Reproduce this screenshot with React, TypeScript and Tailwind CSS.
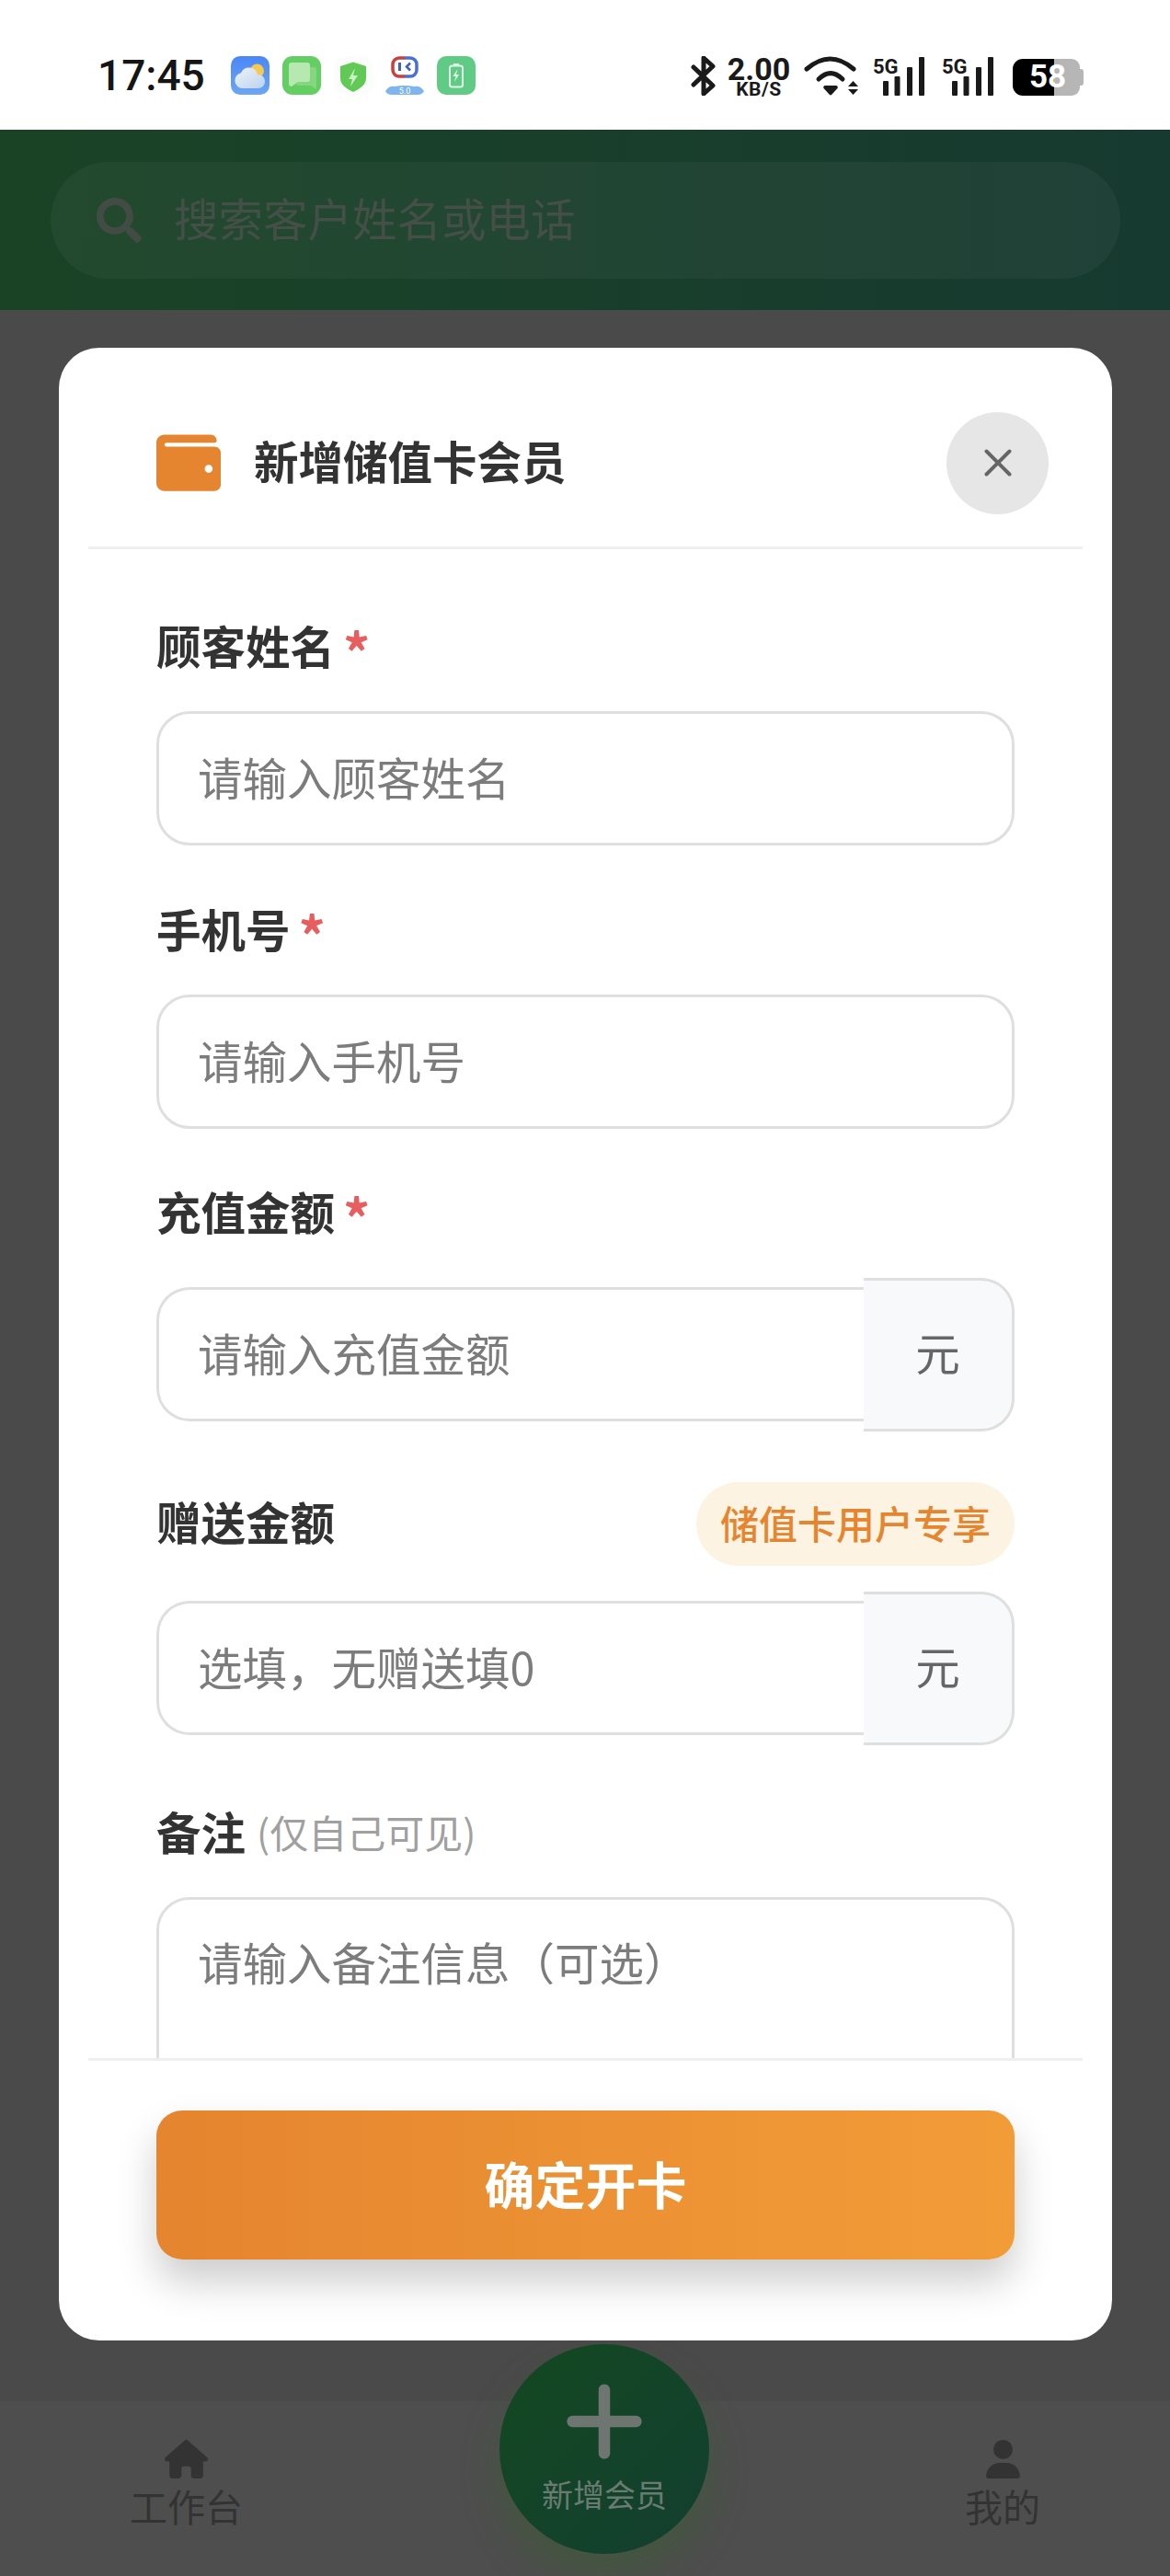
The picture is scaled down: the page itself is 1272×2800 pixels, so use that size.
import React from "react";
import { FaSearch, FaWallet } from "react-icons/fa";
import { FaPlus, FaHouse, FaUser } from "react-icons/fa6";
import { X } from "lucide-react";

function Signal() {
  return (
    <svg width="56" height="43" viewBox="0 0 56 43" fill="#1a1a1a">
      <text x="0" y="19" fontFamily="Roboto" fontWeight="700" fontSize="22">5G</text>
      <rect x="11" y="27" width="6" height="16" rx="1" />
      <rect x="23.5" y="22" width="6" height="21" rx="1" />
      <rect x="37" y="12" width="6" height="31" rx="1" />
      <rect x="50" y="1" width="6" height="42" rx="1" />
    </svg>
  );
}

function StatusLeft() {
  return (
    <div className="flex items-center">
      <span className="w-[114px] text-[46px] leading-[42px] font-medium text-[#151515] font-['Roboto',sans-serif]">17:45</span>
      <div className="ml-[31px] flex gap-[14px]">
        <svg width="42" height="42" viewBox="0 0 42 42">
          <defs>
            <linearGradient id="wx" x1="0" y1="0" x2="0" y2="1">
              <stop offset="0" stopColor="#4a87f5" />
              <stop offset="1" stopColor="#6ea6f2" />
            </linearGradient>
            <linearGradient id="cl" x1="0" y1="0" x2="1" y2="1">
              <stop offset="0" stopColor="#eef3f9" />
              <stop offset="1" stopColor="#bcd2ee" />
            </linearGradient>
          </defs>
          <rect width="42" height="42" rx="10" fill="url(#wx)" />
          <circle cx="28.5" cy="16" r="7.500" fill="#f8c94f" />
          <path d="M13 35a8.500 8.500 0 0 1-2-16.800 9.500 9.500 0 0 1 18 1.800 7.500 7.500 0 0 1 1 15z" fill="url(#cl)" />
        </svg>
        <svg width="42" height="42" viewBox="0 0 42 42">
          <rect width="42" height="42" rx="11" fill="#63cf63" />
          <path d="M15 12h20a2 2 0 0 1 2 2v22l-6-4H17a2 2 0 0 1-2-2z" fill="#85d77f" />
          <path d="M10 7h17a3 3 0 0 1 3 3v15a3 3 0 0 1-3 3H17l-7 5a3 3 0 0 1-3-3V10a3 3 0 0 1 3-3z" fill="#b7e8b2" />
        </svg>
        <svg width="42" height="42" viewBox="0 0 42 42">
          <rect width="42" height="42" rx="10" fill="#fafdfa" />
          <path d="M21 6.500l14 4.500v13c0 7-6 11-14 15-8-4-14-8-14-15V11z" fill="#62c957" />
          <path d="M23 13l-7 12h4l-2 8 8-12h-5z" fill="#c9f1c4" />
        </svg>
        <svg width="42" height="42" viewBox="0 0 42 42">
          <path d="M21 9H15a7 7 0 0 0-7 7v6a7 7 0 0 0 7 7h6" fill="none" stroke="#c9403f" strokeWidth="3.500" transform="translate(0 -7)" />
          <path d="M21 9h6a7 7 0 0 1 7 7v6a7 7 0 0 1-7 7h-6" fill="none" stroke="#4a6fd8" strokeWidth="3.500" transform="translate(0 -7)" />
          <rect x="14" y="7" width="3" height="9" fill="#3e5ec9" />
          <path d="M27 7.500l-4 4 4 4" fill="none" stroke="#3e5ec9" strokeWidth="2.500" />
          <path d="M0 38q4-6 10-5 10-2 22 0 6-1 10 5-2 4-7 4H7q-5 0-7-4z" fill="#7db6ef" />
          <text x="21" y="41" textAnchor="middle" fontSize="9" fill="#fff" fontFamily="Roboto">5.0</text>
        </svg>
        <svg width="42" height="42" viewBox="0 0 42 42">
          <rect width="42" height="42" rx="10" fill="#5fcb85" />
          <rect x="18" y="8" width="6" height="3" fill="#e4f8ea" />
          <rect x="14" y="10.500" width="14" height="23" rx="2.500" fill="none" stroke="#e4f8ea" strokeWidth="2" />
          <path d="M22.500 14l-5 8h3l-1.500 6 5-8h-3z" fill="#e4f8ea" />
        </svg>
      </div>
    </div>
  );
}

function StatusRight() {
  return (
    <div className="flex items-start">
      <svg width="27" height="43" viewBox="0 0 27 43" fill="none" stroke="#1a1a1a" strokeWidth="5" strokeLinejoin="round" strokeLinecap="round">
        <path d="M3 12l21 20-10 9V2l10 9L3 31" />
      </svg>
      <div className="ml-[13px] flex w-[68px] flex-col items-center font-['Roboto',sans-serif] font-bold text-[#1a1a1a]">
        <span className="text-[34px] leading-[28px]">2.00</span>
        <span className="text-[21px] leading-[17px] tracking-[0.5px]">KB/S</span>
      </div>
      <svg className="ml-[15px]" width="59" height="43" viewBox="0 0 59 43" fill="#1a1a1a">
        <path d="M3 14Q28.500-8 54 14" fill="none" stroke="#1a1a1a" strokeWidth="5" strokeLinecap="round" />
        <path d="M16 25Q29 12 42 25" fill="none" stroke="#1a1a1a" strokeWidth="5" strokeLinecap="round" />
        <path d="M23 32h12a2 2 0 0 1 1.500 3L30 42a1.500 1.500 0 0 1-2 0l-6.500-7a2 2 0 0 1 1.500-3z" />
        <path d="M48 33l5.500-6 5.500 6zM48 36h11l-5.500 6z" />
      </svg>
      <div className="ml-[16px]"><Signal /></div>
      <div className="ml-[19px]"><Signal /></div>
      <div className="relative ml-[21px] mt-[3px] flex h-[40px] w-[77px]">
        <div className="h-full w-[45px] rounded-l-[11px] bg-black" />
        <div className="h-full w-[28px] rounded-r-[9px] bg-[#b6b6b6]" />
        <div className="mt-[11px] h-[18px] w-[4px] rounded-r-[3px] bg-[#b6b6b6]" />
        <span className="absolute left-[18px] top-0 text-[35px] leading-[40px] font-bold text-white font-['Roboto',sans-serif]">58</span>
      </div>
    </div>
  );
}

function Label({ text, required }: { text: string; required?: boolean }) {
  return (
    <label className="flex h-[68px] items-center pb-[7px] text-[48.5px] font-bold text-[#333]">
      {text}
      {required && <span className="relative top-[5px] ml-[9px] text-[58px] leading-none text-[#e85d5d]">*</span>}
    </label>
  );
}

function Field({ placeholder }: { placeholder: string }) {
  return (
    <input
      readOnly
      placeholder={placeholder}
      className="mt-[34px] block h-[146px] w-full rounded-[36px] border-[3px] border-[#dfdfdf] bg-white pb-[5px] pl-[42px] pr-[40px] text-[48.5px] outline-none placeholder:text-[#7c7c7c]"
    />
  );
}

function Money({ placeholder, className }: { placeholder: string; className: string }) {
  return (
    <div className={`flex h-[166px] items-center ${className}`}>
      <input
        readOnly
        placeholder={placeholder}
        className="h-[146px] min-w-0 flex-1 rounded-l-[36px] border-[3px] border-r-0 border-[#dfdfdf] bg-white pb-[5px] pl-[42px] pr-[20px] text-[48.5px] outline-none placeholder:text-[#7c7c7c]"
      />
      <div className="flex h-[167px] w-[164px] items-center justify-center rounded-r-[36px] border-[3px] border-l-0 border-[#dfdfdf] bg-[#f8f9fa] pb-[6px] text-[48.5px] text-[#666]">
        元
      </div>
    </div>
  );
}

function Modal() {
  return (
    <div className="absolute left-[64px] top-[378px] flex h-[2166px] w-[1145px] flex-col rounded-[44px] bg-white">
      <header className="mx-[32px] flex h-[219px] shrink-0 items-center justify-between border-b-[3px] border-[#efefef] pl-[74px] pr-[37px] pt-[34px]">
        <div className="flex items-center">
          <FaWallet className="text-[70px] text-[#e5852f]" />
          <h2 className="ml-[36px] pb-[5px] text-[48.5px] font-bold text-[#333]">新增储值卡会员</h2>
        </div>
        <button className="flex h-[111px] w-[111px] items-center justify-center rounded-full bg-[#e6e6e6]">
          <X size={50} strokeWidth={1.9} className="text-[#666]" />
        </button>
      </header>
      <div className="min-h-0 flex-1 overflow-hidden px-[106px] pt-[74px]">
        <Label text="顾客姓名" required />
        <Field placeholder="请输入顾客姓名" />
        <div className="mt-[60px]"><Label text="手机号" required /></div>
        <Field placeholder="请输入手机号" />
        <div className="mt-[59px]"><Label text="充值金额" required /></div>
        <Money className="mt-[35px]" placeholder="请输入充值金额" />
        <div className="mt-[56px] flex h-[91px] items-center justify-between">
          <span className="pb-[6px] text-[48.5px] font-bold text-[#333]">赠送金额</span>
          <span className="flex h-[91px] items-center rounded-full bg-[#fdf3e2] px-[26px] pb-[4px] text-[42px] font-medium text-[#e5852f]">储值卡用户专享</span>
        </div>
        <Money className="mt-[28px]" placeholder="选填，无赠送填0" />
        <label className="mt-[64px] flex h-[68px] items-center pb-[7px] text-[48.5px] font-bold text-[#333]">
          备注
          <span className="ml-[12px] text-[42px] font-normal text-[#a0a0a0]">(仅自己可见)</span>
        </label>
        <div className="mt-[34px] h-[300px] rounded-[36px] border-[3px] border-[#dfdfdf] pl-[42px] pt-[33px] text-[48.5px] leading-[68px] text-[#7c7c7c]">
          请输入备注信息（可选）
        </div>
      </div>
      <footer className="mx-[32px] shrink-0 border-t-[3px] border-[#efefef] px-[74px] pb-[88px] pt-[54px]">
        <button className="h-[162px] w-full rounded-[28px] bg-gradient-to-r from-[#e5852f] to-[#f29c38] pb-[6px] text-[55px] font-bold text-white shadow-[0_24px_44px_rgba(0,0,0,0.2)]">
          确定开卡
        </button>
      </footer>
    </div>
  );
}

export default function App() {
  return (
    <div className="relative flex h-[2800px] w-[1272px] flex-col overflow-hidden bg-[#4a4a4a] font-['Noto_Sans_CJK_SC',sans-serif]">
      <div className="flex h-[141px] shrink-0 items-start justify-between bg-white pl-[106px] pr-[94px] pt-[61px]">
        <StatusLeft />
        <StatusRight />
      </div>
      <div className="flex h-[196px] shrink-0 items-center bg-gradient-to-r from-[#1a4325] to-[#173a30] pl-[55px] pr-[54px]">
        <div className="flex h-[127px] w-full items-center rounded-full bg-[#ffffff0a] pl-[50px]">
          <FaSearch className="text-[49px] text-[#434b45]" />
          <span className="ml-[35px] pb-[6px] text-[48.5px] text-[#434f47]">搜索客户姓名或电话</span>
        </div>
      </div>
      <div className="flex-1" />
      <nav className="flex h-[192px] shrink-0 items-start justify-between border-t-[2px] border-[#4a4a4a] bg-[#4e4e4e] px-[141px] pt-[42px] text-[41px] text-[#333]">
        <div className="flex w-[123px] flex-col items-center">
          <FaHouse className="h-[42px] w-[47px] text-[#333]" />
          <span className="leading-[58px]">工作台</span>
        </div>
        <div className="flex w-[82px] flex-col items-center">
          <FaUser className="h-[42px] w-[37px] text-[#333]" />
          <span className="leading-[58px]">我的</span>
        </div>
      </nav>
      <div className="absolute left-[543px] top-[2548px] flex h-[228px] w-[228px] flex-col items-center rounded-full bg-gradient-to-br from-[#13481f] to-[#133f30] pt-[34px] shadow-[0_24px_40px_rgba(50,100,40,0.38)]">
        <FaPlus className="text-[100px] text-[#6f7570]" />
        <span className="mt-[4px] text-[34px] leading-[50px] text-[#6a7b71]">新增会员</span>
      </div>
      <Modal />
    </div>
  );
}
